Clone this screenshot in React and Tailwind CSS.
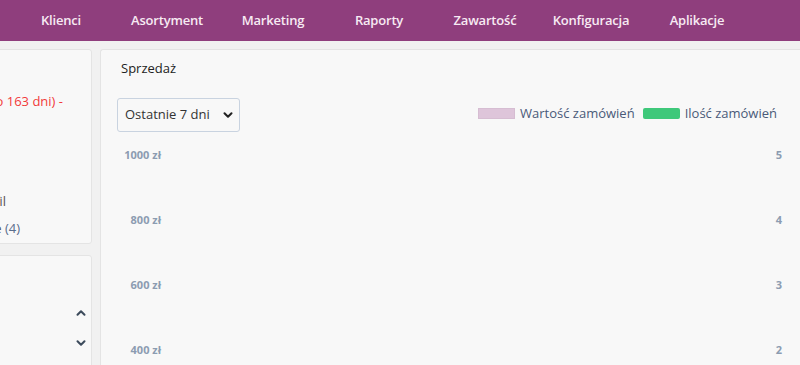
import React from "react";
import { ChevronDown, ChevronUp } from "lucide-react";

const NAV = ["Klienci", "Asortyment", "Marketing", "Raporty", "Zawartość", "Konfiguracja", "Aplikacje"];

const TICKS = [
  { left: "1000 zł", right: "5" },
  { left: "800 zł", right: "4" },
  { left: "600 zł", right: "3" },
  { left: "400 zł", right: "2" },
];

export default function App() {
  return (
    <div
      className="w-[800px] h-[365px] overflow-hidden bg-[#f1f1f1] text-[#333]"
      style={{ fontFamily: '"Open Sans", "Noto Sans", sans-serif' }}
    >
      {/* Top menu */}
      <nav className="h-[41px] bg-[#8f3e7d] flex items-center pl-[8px]">
        {NAV.map((item) => (
          <div key={item} className="w-[106px] text-center text-[13px] font-semibold text-[#f7eaf3] tracking-[-0.2px]">
            {item}
          </div>
        ))}
      </nav>

      <div className="flex pt-[8px] gap-[8px]">
        {/* Left column, scrolled partly out of view */}
        <div className="w-[92px] shrink-0 overflow-hidden">
          <div className="w-[260px] ml-[-168px] flex flex-col gap-[11px]">
            <div className="h-[195px] bg-[#f8f8f8] border border-[#e4e4e4] rounded-[3px] pt-[42px] pl-[20px] text-[13px]">
              <div className="text-[#f23a3a] text-right pr-[28px]">(aktywne do 163 dni) -</div>
              <div className="mt-[80px] text-right pr-[85px] text-[#555]">Profil</div>
              <div className="mt-[8px] text-right pr-[71px] text-[#555]">
                Aktywne <span className="text-[#5a6d8c]">(4)</span>
              </div>
            </div>
            <div className="h-[200px] bg-[#f8f8f8] border border-[#e4e4e4] rounded-[3px] pt-[50px] pr-[3px] flex flex-col items-end gap-[14px]">
              <ChevronUp className="w-[14px] h-[14px] text-[#3d4b5c]" strokeWidth={3.5} />
              <ChevronDown className="w-[14px] h-[14px] text-[#3d4b5c] mt-[2px]" strokeWidth={3.5} />
            </div>
          </div>
        </div>

        {/* Sales panel */}
        <div className="flex-1 h-[340px] bg-[#f8f8f8] border border-[#e4e4e4] border-r-0 rounded-l-[3px] pl-[16px] pr-[18px] pt-[9px]">
          <div className="text-[13px] text-[#222] pl-[4px]">Sprzedaż</div>

          <div className="mt-[19px] flex items-center justify-between">
            <div className="w-[123px] h-[34px] border border-[#c9d3e0] rounded-[3px] bg-[#f8f8f8] flex items-center justify-between pl-[7px] pr-[4px] text-[13px] text-[#333]">
              <span>Ostatnie 7 dni</span>
              <ChevronDown className="w-[14px] h-[14px] text-[#222]" strokeWidth={3.5} />
            </div>
            <div className="flex items-center gap-[5px] text-[13px] text-[#4a5a78] mt-[-2px] mr-[5px]">
              <span className="w-[37px] h-[11px] bg-[#dec5da] border border-[#d6bdd2]" />
              <span>Wartość zamówień</span>
              <span className="ml-[3px] w-[37px] h-[11px] rounded-[2px] bg-[#3ec87a]" />
              <span>Ilość zamówień</span>
            </div>
          </div>

          {/* Chart axes */}
          <div className="mt-[15px] flex flex-col">
            {TICKS.map((t) => (
              <div key={t.right} className="h-[65px] flex justify-between text-[11px] font-bold text-[#8c9cb1]">
                <span className="w-[44px] text-right">{t.left}</span>
                <span>{t.right}</span>
              </div>
            ))}
          </div>
        </div>
      </div>
    </div>
  );
}
